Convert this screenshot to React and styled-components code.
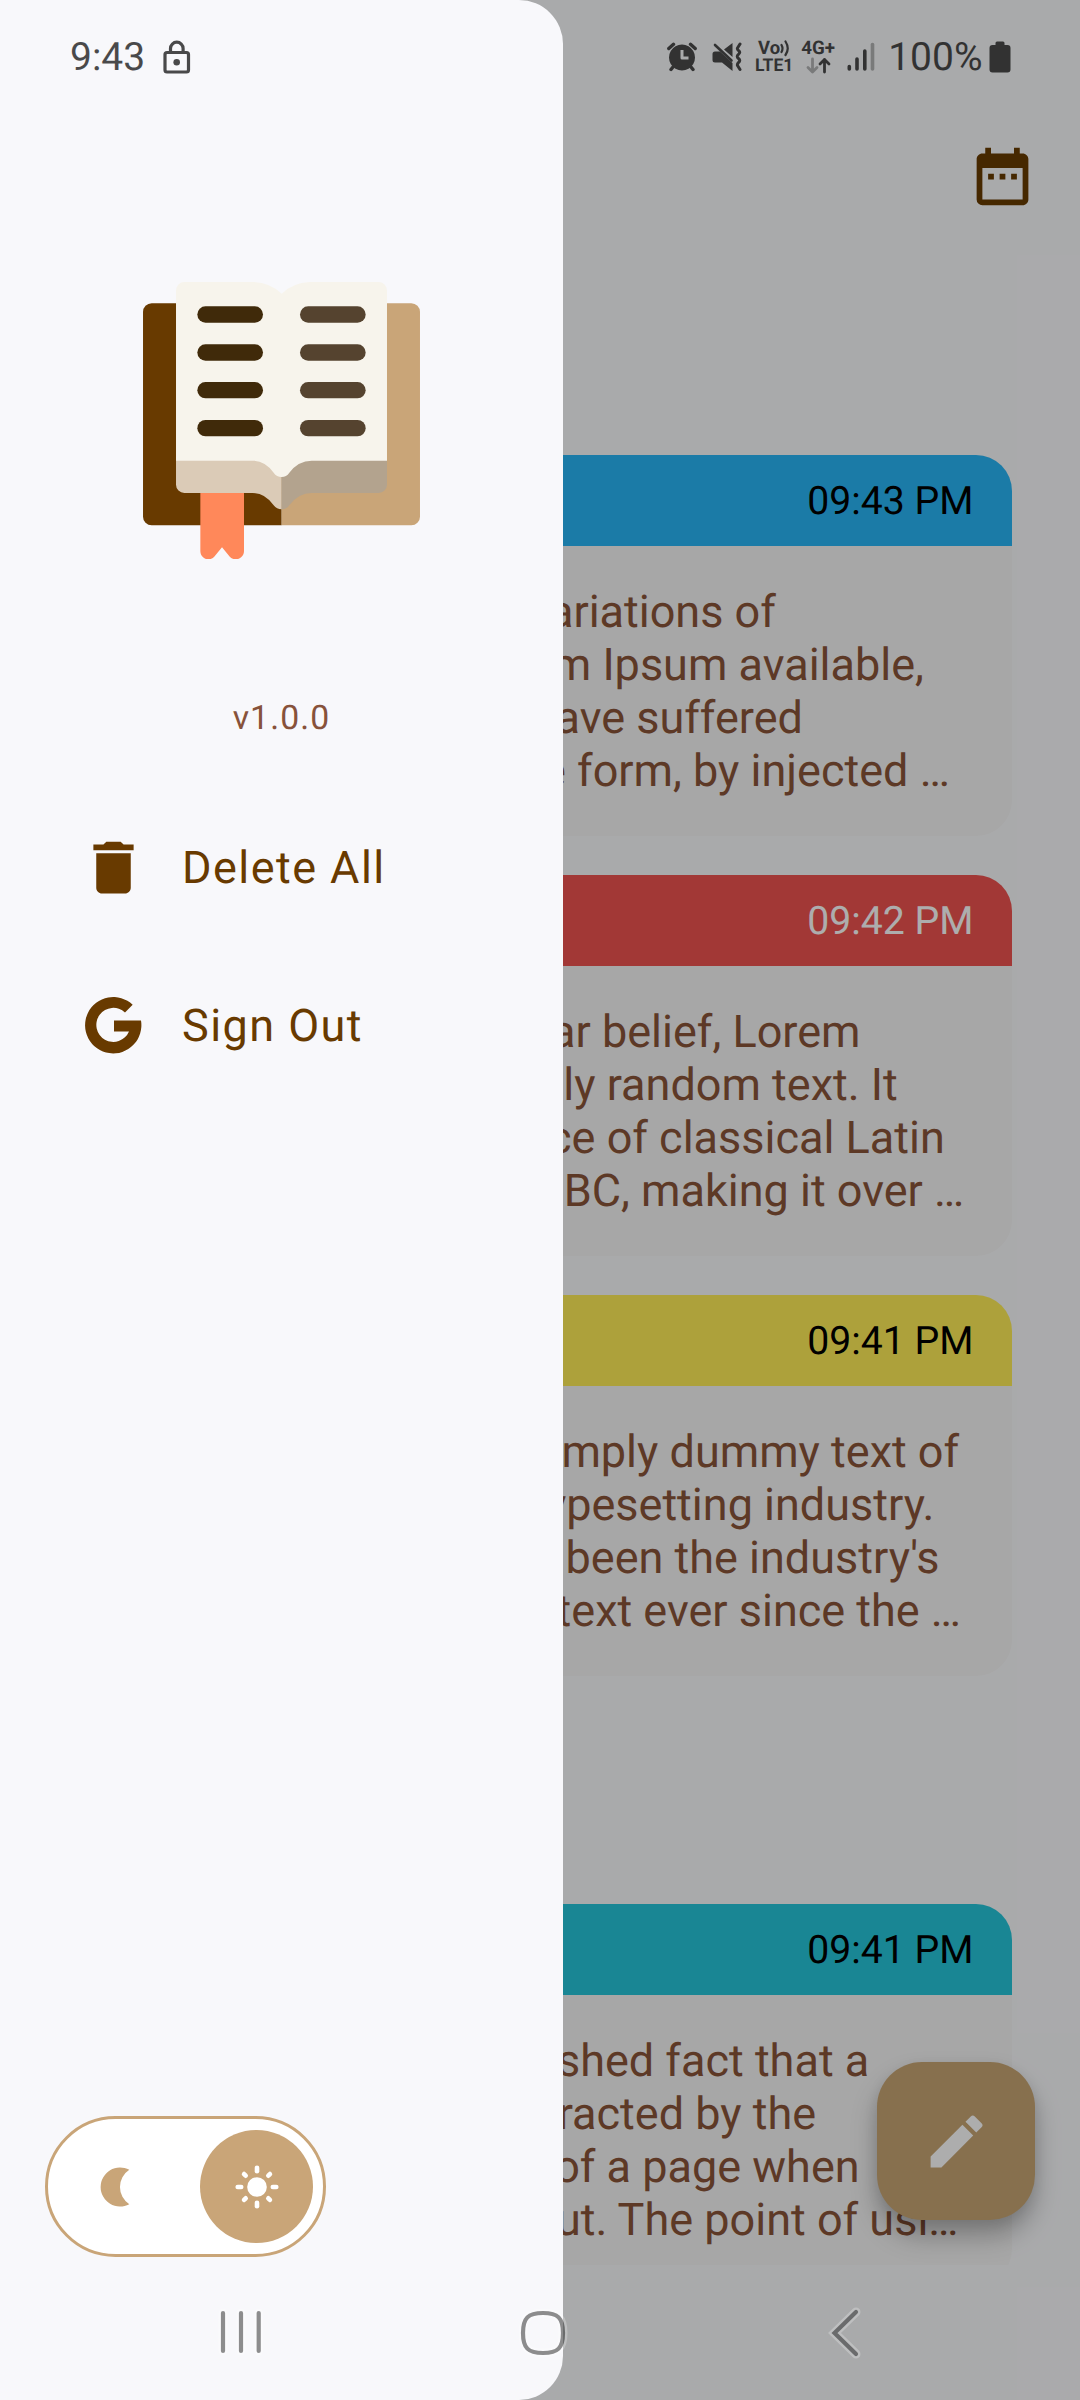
import React from 'react';
import styled, { createGlobalStyle } from 'styled-components';
import { MdDateRange, MdDelete, MdEdit } from 'react-icons/md';

const GlobalStyle = createGlobalStyle`
  *, *::before, *::after { box-sizing: border-box; }
  body {
    margin: 0;
    background: #fafbfd;
    font-family: Roboto, "Noto Sans", sans-serif;
    text-rendering: geometricPrecision;
  }
  svg { display: block; flex: none; }
`;

const Screen = styled.div`
  position: relative;
  width: 1080px;
  height: 2400px;
  overflow: hidden;
  background: #fafbfd;
`;

/* ---------- journal page ---------- */

const Page = styled.main`
  display: flex;
  flex-direction: column;
  height: 2265px;
  overflow: hidden;
`;

const Toolbar = styled.header`
  display: flex;
  justify-content: flex-end;
  flex: none;
  height: 455px;
  padding: 142px 43.500px 0 0;
  color: #673b00;
`;

const Day = styled.section`
  display: flex;
  flex-direction: column;
  flex: none;
  gap: 39px;
  padding: 0 68px 228px 167px;
`;

const Card = styled.article`
  flex: none;
  height: 381px;
  border-radius: 36px;
  overflow: hidden;
  background: #f6f6f6;
`;

const CardHeader = styled.div`
  display: flex;
  justify-content: flex-end;
  height: 91px;
  padding: 0 38.500px;
  background: ${(p) => p.$color};
  color: ${(p) => (p.$light ? '#ffffff' : '#000000')};
  font-size: 39.2px;
  line-height: 92px;
`;

const CardText = styled.p`
  margin: 0;
  padding: 39px 0 0 39.5px;
  color: #8a5439;
  font-size: 45px;
  line-height: 53px;
  white-space: pre;
`;

const Fab = styled.button`
  position: absolute;
  left: 877px;
  top: 2062px;
  display: flex;
  align-items: center;
  justify-content: center;
  width: 158px;
  height: 158px;
  padding: 0;
  border: 0;
  border-radius: 45px;
  background: #c8a674;
  color: #fff;
  box-shadow: 0 16px 26px rgba(0, 0, 0, 0.26), 0 4px 14px rgba(0, 0, 0, 0.08);
`;

const Scrim = styled.div`
  position: absolute;
  inset: 0;
  background: rgba(0, 0, 0, 0.32);
`;

/* ---------- drawer ---------- */

const Drawer = styled.aside`
  position: absolute;
  left: 0;
  top: 0;
  display: flex;
  flex-direction: column;
  width: 563px;
  height: 2400px;
  padding-top: 281.5px;
  border-radius: 0 44px 44px 0;
  background: #f8f8fb;
`;

const LogoBox = styled.div`
  display: flex;
  justify-content: center;
  width: 563px;
`;

const Version = styled.div`
  margin-top: 140.5px;
  height: 40px;
  text-align: center;
  color: #87523a;
  font-size: 33.75px;
  line-height: 40px;
  letter-spacing: 1.1px;
`;

const Menu = styled.nav`
  display: flex;
  flex-direction: column;
  padding: 49.5px 0 0 78.5px;
`;

const MenuItem = styled.a`
  display: flex;
  align-items: center;
  gap: 34.500px;
  height: 158px;
  color: #683a00;
  font-size: 45px;
  line-height: 53px;
  letter-spacing: 1.45px;
`;

const ThemeToggle = styled.div`
  display: flex;
  align-items: center;
  justify-content: space-between;
  width: 281px;
  height: 141px;
  margin: auto 0 143px 45px;
  padding: 0 10px;
  border: 3px solid #c9a578;
  border-radius: 71px;
  background: #fff;
`;

const Knob = styled.div`
  display: flex;
  align-items: center;
  justify-content: center;
  width: 113px;
  height: 113px;
  border-radius: 50%;
  background: ${(p) => (p.$on ? '#c9a578' : 'transparent')};
`;

/* ---------- system bars ---------- */

const StatusBar = styled.div`
  position: absolute;
  left: 0;
  top: 0;
  display: flex;
  align-items: center;
  justify-content: space-between;
  width: 1080px;
  height: 114px;
  padding: 0 69.5px 0 70px;
  color: #000;
  opacity: 0.7;
`;

const StatusGroup = styled.div`
  display: flex;
  align-items: center;
`;

const StatusText = styled.span`
  font-size: 39px;
  line-height: 46px;
  margin: ${(p) => p.$m || '0'};
`;

const Stack = styled.div`
  display: flex;
  flex-direction: column;
  align-items: center;
  width: ${(p) => p.$w}px;
  height: 36px;
  margin-right: ${(p) => p.$mr}px;
  font-size: 17.5px;
  font-weight: 700;
  line-height: 18px;
  white-space: nowrap;
`;

const StackRow = styled.div`
  display: flex;
  align-items: center;
  height: 18px;
  font-size: ${(p) => p.$size || 17.5}px;
`;

const NavBar = styled.div`
  position: absolute;
  left: 0;
  bottom: 0;
  display: flex;
  align-items: center;
  width: 1080px;
  height: 135px;
  padding: 0 0 0 211px;
`;

const NavIcon = styled.svg`
  width: 60px;
  height: 60px;
  margin-right: ${(p) => p.$mr || 0}px;
  margin-top: 1px;
  fill: none;
  stroke-linecap: round;
  stroke-linejoin: miter;
`;

function NavGlyph({ d, mr }) {
  return (
    <NavIcon viewBox="0 0 60 60" $mr={mr}>
      <path d={d} stroke="#fff" strokeOpacity="0.25" strokeWidth="9" />
      <path d={d} stroke="#000" strokeOpacity="0.44" strokeWidth="4.2" />
    </NavIcon>
  );
}

function BookLogo() {
  const rows = [138, 252, 365, 479];
  return (
    <svg width="277" height="277.3" viewBox="69 65 831 832">
      <path d="M485 129H95a26 26 0 0 0-26 26V769a26 26 0 0 0 26 26H485Z" fill="#683a00" />
      <path d="M485 129H874a26 26 0 0 1 26 26V769a26 26 0 0 1-26 26H485Z" fill="#c9a578" />
      <path d="M241 680H372V872C372 896 343 904 330 890L306 861L282 890C269 904 241 896 241 872Z" fill="#ff885a" />
      <path d="M168 590H485V747Q470 747 461 735Q435 698 398 698H193a25 25 0 0 1-25-25Z" fill="#dbcbb7" />
      <path d="M801 590H485V747Q500 747 508 735Q535 698 575 698H776a25 25 0 0 0 25-25Z" fill="#b3a38e" />
      <path
        d="M168 601V90a25 25 0 0 1 25-25H402Q450 67 485 100Q520 67 568 65H776a25 25 0 0 1 25 25V601H575Q535 601 508 637Q499 650 485 650Q470 650 461 637Q435 601 398 601Z"
        fill="#f7f4ec"
      />
      {rows.map((y) => (
        <g key={y}>
          <rect x="232" y={y} width="197" height="49" rx="24.5" fill="#402a0a" />
          <rect x="540" y={y} width="197" height="49" rx="24.5" fill="#55432f" />
        </g>
      ))}
    </svg>
  );
}

function GoogleIcon() {
  return (
    <svg width="69" height="69" viewBox="56 934.5 207 207" fill="currentColor">
      <path d="M217 976L194 999A51 51 0 1 0 206 1056H161V1023H242A84.500 84.500 0 1 1 217 976Z" />
    </svg>
  );
}

function Moon() {
  return (
    <svg width="40" height="40" viewBox="0 0 40 40" fill="#c9a578">
      <path d="M34.300 2.800A19.500 19.500 0 1 0 34.300 37.200A20.500 20.500 0 0 1 34.300 2.800Z" />
    </svg>
  );
}

function Sun() {
  return (
    <svg width="44" height="44" viewBox="-22 -22 44 44">
      <circle r="9.800" fill="#fff" />
      {[0, 45, 90, 135, 180, 225, 270, 315].map((a) => (
        <path
          key={a}
          d={a % 90 ? 'M0-16V-18.300' : 'M0-15.800V-19.300'}
          transform={`rotate(${a})`}
          stroke="#fff"
          strokeWidth="4.600"
          strokeLinecap="round"
        />
      ))}
    </svg>
  );
}

const Svg = styled.svg`
  margin-right: ${(p) => p.$mr || 0}px;
`;

const ENTRIES = [
  {
    time: '09:43 PM',
    color: '#29b6f6',
    text: 'There are many variations of\npassages of Lorem Ipsum available,\nbut the majority have suffered\nalteration in some form, by injected …',
  },
  {
    time: '09:42 PM',
    color: '#ef5350',
    light: true,
    text: 'Contrary to popular belief, Lorem\nIpsum is not simply random text. It\nhas roots in a piece of classical Latin\nliterature from 45 BC, making it over …',
  },
  {
    time: '09:41 PM',
    color: '#ffee58',
    text: "Lorem Ipsum is simply dummy text of\nthe printing and typesetting industry.\nLorem Ipsum has been the industry's\nstandard dummy text ever since the …",
  },
];

const EARLIER = [
  {
    time: '09:41 PM',
    color: '#26c6da',
    text: 'It is a long established fact that a\nreader will be distracted by the\nreadable content of a page when\nlooking at its layout. The point of usi…',
  },
];

function Entry({ entry }) {
  return (
    <Card>
      <CardHeader $color={entry.color} $light={entry.light}>{entry.time}</CardHeader>
      <CardText>{entry.text}</CardText>
    </Card>
  );
}

export default function App() {
  return (
    <Screen>
      <GlobalStyle />
      <Page>
        <Toolbar>
          <MdDateRange size={69} />
        </Toolbar>
        <Day>{ENTRIES.map((e) => <Entry key={e.time} entry={e} />)}</Day>
        <Day>{EARLIER.map((e) => <Entry key={e.time} entry={e} />)}</Day>
      </Page>
      <Fab aria-label="New entry">
        <MdEdit size={69} />
      </Fab>
      <Scrim />

      <Drawer>
        <LogoBox><BookLogo /></LogoBox>
        <Version>v1.0.0</Version>
        <Menu>
          <MenuItem><MdDelete size={69} />Delete All</MenuItem>
          <MenuItem><GoogleIcon />Sign Out</MenuItem>
        </Menu>
        <ThemeToggle>
          <Knob><Moon /></Knob>
          <Knob $on><Sun /></Knob>
        </ThemeToggle>
      </Drawer>

      <StatusBar>
        <StatusGroup>
          <StatusText $m="0 17.5px 0 0">9:43</StatusText>
          <svg width="28" height="34" viewBox="0 0 28 34" fill="none" stroke="#000" strokeWidth="3.200">
            <rect x="2" y="12.500" width="23.500" height="19.500" rx="2" />
            <path d="M7.500 12V8.500a6.300 6.300 0 0 1 12.600 0V12" />
            <circle cx="13.700" cy="22.300" r="3.300" fill="#000" stroke="none" />
          </svg>
        </StatusGroup>
        <StatusGroup>
          <Svg width="30" height="30" viewBox="0 0 30 30" $mr={15}>
            <path d="M1.800 6.500L6.500 2.300M28.200 6.500L23.500 2.300M6 25L4 27.500M24 25L26 27.500" stroke="#000" strokeWidth="3.400" strokeLinecap="round" />
            <path fillRule="evenodd" d="M15 2.500a13 13 0 1 0 .01 0ZM13.500 8h3v6.500h5v3h-6.500q-1.500 0-1.500-1.500Z" />
          </Svg>
          <Svg width="31" height="30" viewBox="0 0 31 30" $mr={12}>
            <path d="M3 9.500H8L20.500 21V29L10 20.500H3Q.5 20.500.5 18V12Q.5 9.500 3 9.500ZM12 7.500L20.500 1V15Z" />
            <path d="M3 3L19.500 18.500" stroke="#000" strokeWidth="2.600" strokeLinecap="round" />
            <path d="M28 2L25.500 6Q25 7.500 26.500 8.500Q29 10.300 26.500 12.300Q24 14.500 26.500 16.500Q29 18.500 26.500 20.500Q25 22 25.500 23.500L28 27.500" fill="none" stroke="#000" strokeWidth="3" strokeLinecap="round" strokeLinejoin="round" />
          </Svg>
          <Stack $w={38} $mr={8}>
            <StackRow $size={18.5}>
              Vo
              <svg width="10" height="18" viewBox="0 0 10 18" fill="none" stroke="#000" strokeWidth="2.200" strokeLinecap="round">
                <path d="M1.500 6Q3.500 9.500 1.500 13M5.500 2.500Q10 9.500 5.500 16" />
              </svg>
            </StackRow>
            <StackRow>LTE1</StackRow>
          </Stack>
          <Stack $w={34} $mr={12}>
            <StackRow $size={18.8}>4G+</StackRow>
            <svg width="26" height="18" viewBox="0 0 26 18" fill="none" strokeWidth="2.800" strokeLinecap="round" strokeLinejoin="round">
              <path d="M7.500 2V15M3 10.500L7.500 15L12 10.500" stroke="#000" strokeOpacity="0.4" />
              <path d="M19.500 15V2.500M15 7L19.500 2.500L24 7" stroke="#000" />
            </svg>
          </Stack>
          <Svg width="28" height="30" viewBox="0 0 28 30" $mr={13} stroke="#000" strokeWidth="3.600" strokeLinecap="round">
            <path d="M2.300 24.500V27M10 17V27M17.800 9V27" />
            <path d="M25.500 2.500V27" strokeOpacity="0.4" />
          </Svg>
          <StatusText $m="0 6px 0 0">100%</StatusText>
          <svg width="22" height="32" viewBox="0 0 22 32">
            <path d="M6.500 4V2Q6.500.5 8 .5H14Q15.500.5 15.500 2V4H18.500Q21.500 4 21.500 7V28.500Q21.500 31.500 18.500 31.500H3.500Q.5 31.500.5 28.500V7Q.5 4 3.500 4Z" />
          </svg>
        </StatusGroup>
      </StatusBar>

      <NavBar>
        <NavGlyph d="M12 10V48M30 10V48M47.700 10V48" mr={242} />
        <NavGlyph d="M30 10C45 10 50 15 50 30C50 45 45 50 30 50C15 50 10 45 10 30C10 15 15 10 30 10Z" mr={244} />
        <NavGlyph d="M39 9L17.500 30L39 51" />
      </NavBar>
    </Screen>
  );
}
